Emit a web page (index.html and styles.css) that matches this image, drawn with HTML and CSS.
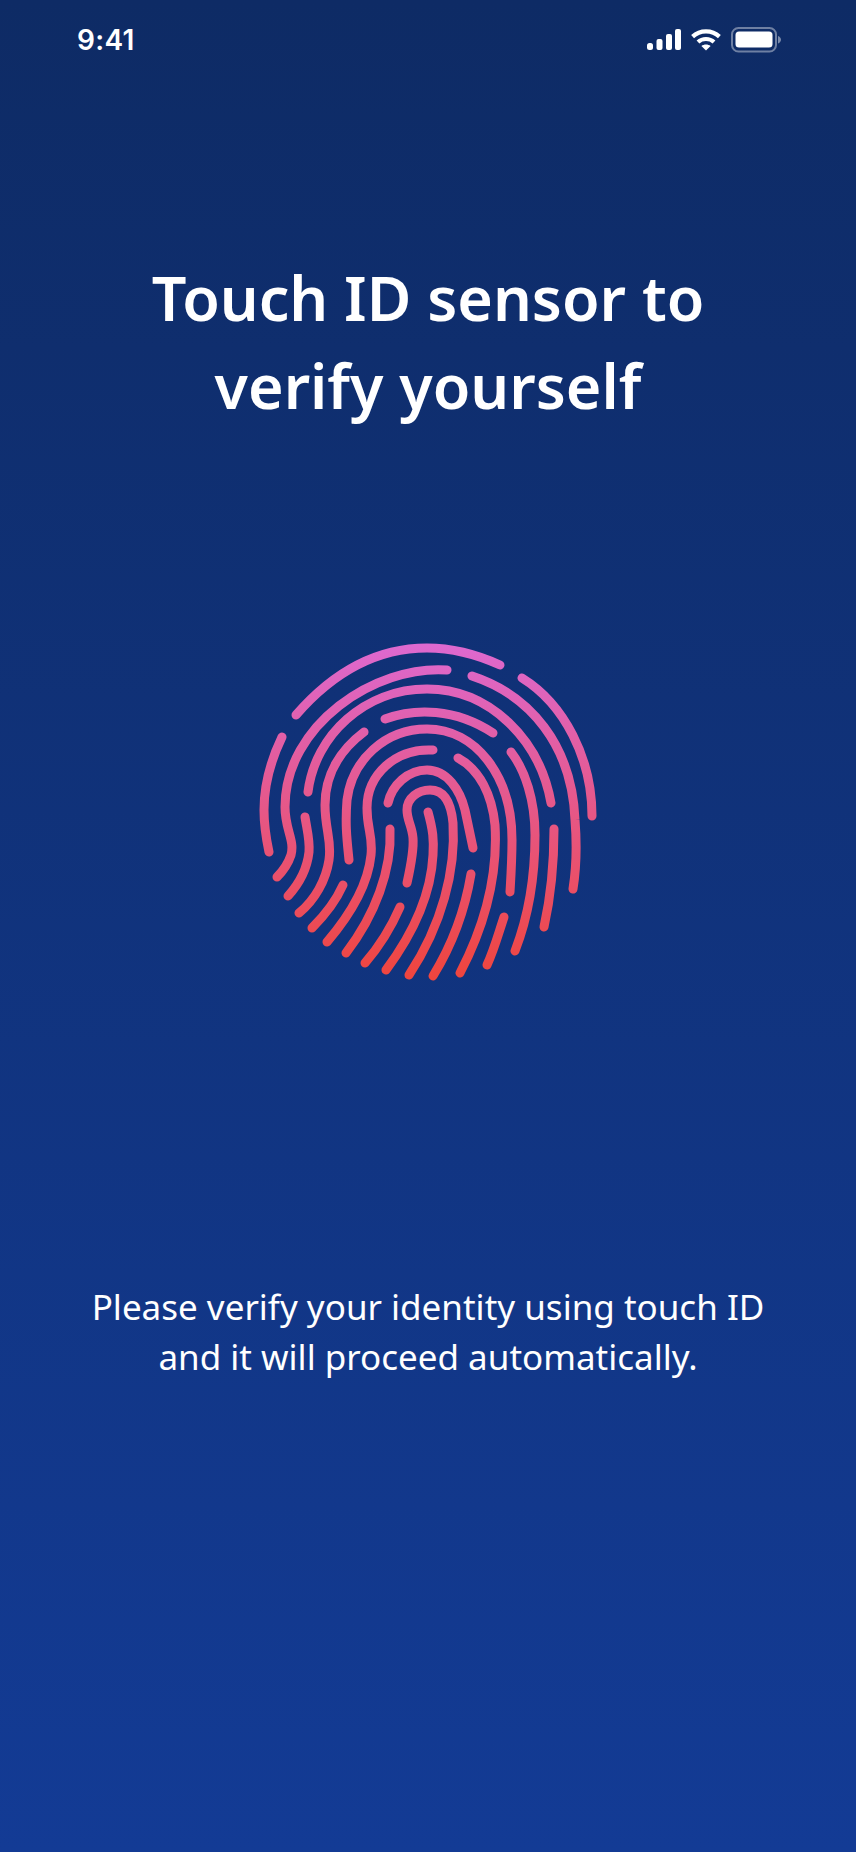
FILE: index.html
```html
<!DOCTYPE html>
<html lang="en">
<head>
  <meta charset="UTF-8" />
  <meta name="viewport" content="width=device-width, initial-scale=1.0"/>
  <title>Touch ID</title>
  <link rel="stylesheet" href="styles.css">
</head>
<body>
  <div class="screen">
    <div class="status-bar">
      <span class="time">9:41</span>
      <div class="status-icons">
        <svg class="signal" width="34" height="22" viewBox="0 0 34 22" fill="#fff">
          <rect x="0" y="14" width="6" height="7" rx="2.5"/>
          <rect x="9.5" y="10" width="6" height="11" rx="2"/>
          <rect x="19" y="5" width="6" height="16" rx="2"/>
          <rect x="28" y="0" width="6" height="21" rx="2"/>
        </svg>
        <svg class="wifi" width="30" height="22" viewBox="0 0 30 22" fill="none" stroke="#fff" stroke-width="4.2">
          <path d="M1.6 7.6C9 0.6 21 0.6 28.4 7.6"/>
          <path d="M7 13C11.4 9 18.6 9 23 13"/>
          <path d="M15 21.6L10.4 17C13 15 17 15 19.6 17Z" fill="#fff" stroke="none"/>
        </svg>
        <svg class="battery" width="50" height="26" viewBox="0 0 50 26" fill="none">
          <rect x="1" y="1" width="44" height="23.5" rx="6.5" stroke="#fff" stroke-opacity="0.4" stroke-width="2"/>
          <rect x="4.5" y="4.5" width="37" height="16" rx="3.5" fill="#fff"/>
          <path d="M47 9V16.5C48.6 16 50 14.6 50 12.8C50 11 48.6 9.5 47 9Z" fill="#fff" fill-opacity="0.45"/>
        </svg>
      </div>
    </div>

    <h1 class="title">Touch ID sensor to<br>verify yourself</h1>

    <svg class="fingerprint" width="350" height="350" viewBox="253 635 350 350" fill="none" stroke="url(#fpGrad)" stroke-width="9" stroke-linecap="round">
      <defs>
        <linearGradient id="fpGrad" gradientUnits="userSpaceOnUse" x1="427" y1="644" x2="427" y2="980">
          <stop offset="0" stop-color="#dd69d0"/>
          <stop offset="1" stop-color="#ef453d"/>
        </linearGradient>
      </defs>
      <path d="M296 715C335 670 380 648 427 648C452 648 478 655 500 665"/>
      <path d="M522 678C564 704 592 758 592 816"/>
      <path d="M282 737C270 762 264 786 264 810C264 825 266 838 269 852"/>
      <path d="M447 670C375 665 285 725 285 807C285 830 295 840 291 855C288 864 283 871 277 877"/>
      <path d="M472 676C530 695 572 745 575 820C577 845 576 870 573 889"/>
      <path d="M308 792C315 735 365 689 427 689C490 689 540 740 551 803"/>
      <path d="M385 719C415 708 455 708 493 733"/>
      <path d="M364 732C340 750 325 775 325 805C325 830 332 840 329 860C326 880 315 900 299 913"/>
      <path d="M305 817C307 830 310 840 309 852C307 870 298 885 288 896"/>
      <path d="M349 860C347 840 345 825 347 800C352 760 385 729 427 729C475 729 512 775 512 840C512 860 511 875 510 892"/>
      <path d="M433 750C395 748 367 775 367 808C367 830 373 835 371 855C368 885 350 915 327 942"/>
      <path d="M458 758C480 770 492 795 495 825C498 875 485 925 460 973"/>
      <path d="M388 803C392 785 408 770 427 770C447 770 460 790 465 810L473 848"/>
      <path d="M407 883C411 865 414 850 413 838C412 826 407 820 407 810C407 798 418 790 430 790C444 790 451 802 453 823C456 870 442 925 409 975"/>
      <path d="M428 812C433 830 434 840 433 855C431 895 412 935 386 970"/>
      <path d="M511 752C525 770 535 800 535 835C535 880 527 920 515 951"/>
      <path d="M471 874C465 910 452 945 433 976"/>
      <path d="M504 917C498 935 494 950 487 965"/>
      <path d="M554 829C554 865 550 900 544 927"/>
      <path d="M400 907C390 930 378 948 365 963"/>
      <path d="M390 829C392 870 375 915 346 953"/>
      <path d="M343 885C335 903 325 915 312 928"/>
    </svg>

    <p class="message">Please verify your identity using touch ID<br>and it will proceed automatically.</p>
  </div>
</body>
</html>
```

FILE: styles.css
```css
html, body { margin: 0; padding: 0; }
body { font-family: "Noto Sans", "Open Sans", sans-serif; color: #fff; }

.screen {
  width: 856px;
  height: 1852px;
  background: linear-gradient(180deg, #0e2b65 0%, #133b95 100%);
  display: flex;
  flex-direction: column;
  align-items: center;
  overflow: hidden;
}

.status-bar {
  width: 100%;
  box-sizing: border-box;
  height: 80px;
  padding: 0 75px 0 77px;
  display: flex;
  justify-content: space-between;
  align-items: center;
}
.time { font-family: Inter, sans-serif; font-weight: 600; font-size: 28px; letter-spacing: 0.3px; }
.status-icons { display: flex; align-items: center; gap: 10px; }

.title {
  margin: 174px 0 0;
  font-size: 61px;
  font-weight: 600;
  line-height: 88px;
  text-align: center;
}

.fingerprint { display: block; margin-top: 205px; }

.message {
  margin: 297px 0 0;
  font-size: 35px;
  line-height: 50px;
  text-align: center;
}
```
